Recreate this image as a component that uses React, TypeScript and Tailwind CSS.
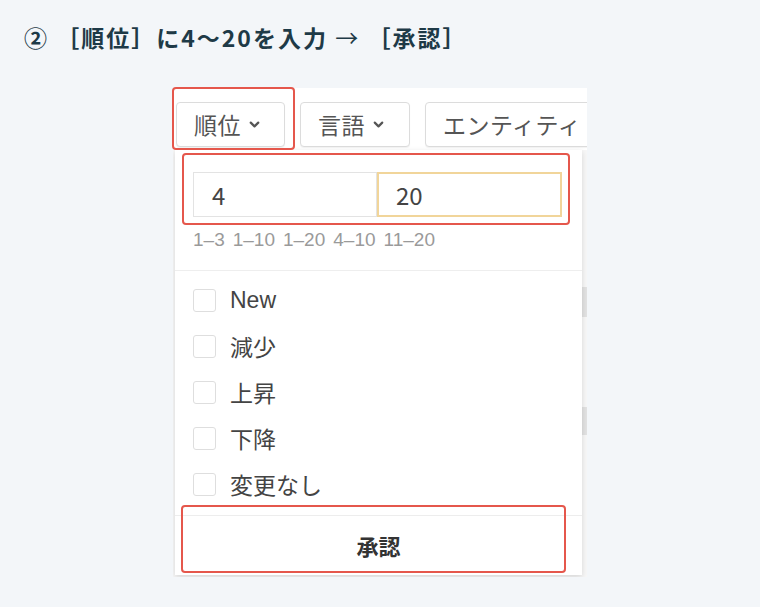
import { ChevronDown } from 'lucide-react';

const ranges = ['1–3', '1–10', '1–20', '4–10', '11–20'];
const statuses = ['New', '減少', '上昇', '下降', '変更なし'];

function FilterButton({ label, width, chevron = true }: { label: string; width: string; chevron?: boolean }) {
  return (
    <div
      className={`flex h-[45px] shrink-0 items-center gap-[6px] rounded-[4px] border border-[#dcdcdc] bg-white pl-[17px] text-[23px] text-[#555] shadow-[0_1px_1px_rgba(0,0,0,0.05)] ${width}`}
    >
      <span className="whitespace-nowrap tracking-[0.5px]">{label}</span>
      {chevron && <ChevronDown className="h-[15px] w-[15px] text-[#555]" strokeWidth={3.5} />}
    </div>
  );
}

export default function App() {
  return (
    <div className="relative h-[607px] w-[760px] overflow-hidden bg-[#f3f6f9] font-['Noto_Sans_CJK_JP','Noto_Sans',sans-serif]">
      {/* Heading */}
      <div className="h-[88px] pl-[24px] pt-[20px] text-[23px] font-bold leading-[34px] tracking-[2px] text-[#1e3a47]">
        ② ［順位］に4〜20を入力 <span className="font-normal">→</span> ［承認］
      </div>

      {/* Screenshot */}
      <div className="relative ml-[173px] h-[489px] w-[414px] overflow-hidden bg-[#f7f7f7]">
        {/* page fragments behind the dropdown */}
        <div className="absolute right-0 top-[199px] h-[30px] w-[5px] bg-[#e2e2e2]" />
        <div className="absolute right-0 top-[319px] h-[28px] w-[5px] bg-[#e2e2e2]" />

        {/* Toolbar */}
        <div className="flex h-[62px] gap-[15px] bg-white pl-[3px] pt-[14px]">
          <FilterButton label="順位" width="w-[109px]" />
          <FilterButton label="言語" width="w-[110px]" />
          <FilterButton label="エンティティ" width="w-[220px]" chevron={false} />
        </div>

        {/* Dropdown */}
        <div className="relative ml-[2px] flex h-[425px] w-[407px] flex-col bg-white shadow-[0_2px_6px_rgba(0,0,0,0.14)]">
          <div className="px-[18px] pt-[22px]">
            <div className="flex">
              <div className="flex h-[45px] w-[184px] items-center border border-[#e3e3e3] pl-[18px] text-[24px] text-[#444]">
                4
              </div>
              <div className="flex h-[45px] w-[185px] items-center border-2 border-[#f1d59a] pl-[17px] text-[24px] text-[#444]">
                20
              </div>
            </div>
            <div className="mt-[11px] flex gap-[8px] font-['Liberation_Sans',sans-serif] text-[19px] leading-[24px] text-[#9a9a9a]">
              {ranges.map((r) => (
                <span key={r}>{r}</span>
              ))}
            </div>
          </div>

          <div className="mt-[18px] border-t border-[#eeeeee] pb-[8px] pt-[6px]">
            {statuses.map((s) => (
              <div key={s} className="flex h-[46px] items-center gap-[14px] pl-[18px]">
                <span className="h-[23px] w-[23px] rounded-[3px] border-[1.5px] border-[#dedede] bg-white" />
                <span
                  className={`text-[23px] text-[#444] ${s === 'New' ? "font-['Liberation_Sans',sans-serif] text-[22px]" : ''}`}
                >
                  {s}
                </span>
              </div>
            ))}
          </div>

          <div className="flex flex-1 items-center justify-center border-t border-[#ededed] text-[22px] font-bold text-[#333]">
            承認
          </div>
        </div>
      </div>

      {/* Red annotation boxes */}
      <div className="absolute left-[172px] top-[87px] h-[63px] w-[123px] rounded-[4px] border-2 border-[#e5574c]" />
      <div className="absolute left-[182px] top-[153px] h-[72px] w-[388px] rounded-[4px] border-2 border-[#e5574c]" />
      <div className="absolute left-[181px] top-[505px] h-[68px] w-[385px] rounded-[4px] border-2 border-[#e5574c]" />
    </div>
  );
}
